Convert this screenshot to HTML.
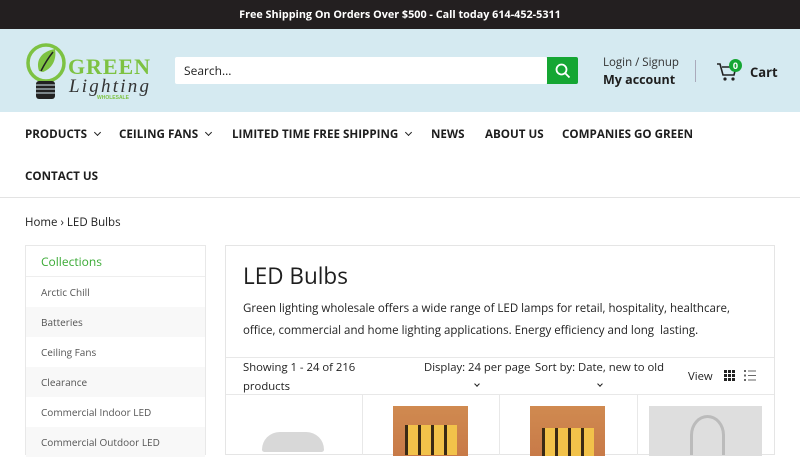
<!DOCTYPE html>
<html><head><meta charset="utf-8"><style>
*{margin:0;padding:0;box-sizing:border-box}
body{width:800px;height:450px;overflow:hidden;background:#fff;font-family:"Open Sans","DejaVu Sans","Liberation Sans",sans-serif;color:#1e1e1e;position:relative}
.a{position:absolute;white-space:nowrap}
.top{left:0;top:0;width:800px;height:29px;background:#231f20;color:#fff;font-weight:bold;font-size:10.8px;text-align:center;line-height:30px}
.hdr{left:0;top:29px;width:800px;height:83px;background:#d5eaf1}
.nav{font-size:11.6px;font-weight:bold;color:#1e1e1e}
.chev{display:inline-block;width:5px;height:5px;border-right:1.5px solid #222;border-bottom:1.5px solid #222;transform:rotate(45deg);margin-left:8px;position:relative;top:-3px}
.side{left:25px;top:245px;width:181px;height:210px;border:1px solid #e8e8e8;background:#fff}
.side div{height:30px;line-height:30px;padding-left:15px;font-size:10px;color:#555}
.main{left:225px;top:245px;width:550px;height:210px;border:1px solid #e5e5e5;background:#fff}
</style></head><body>
<div class="a top">Free Shipping On Orders Over $500 - Call today 614-452-5311</div>
<div class="a hdr"></div>
<svg class="a" style="left:25px;top:41px" width="130" height="62" viewBox="0 0 130 62">
<circle cx="21" cy="22" r="18" fill="none" stroke="#7dc242" stroke-width="3.5"/>
<path d="M14 30 C10 18 18 10 30 8 C32 20 26 28 18 31 Z" fill="#7dc242"/>
<path d="M16 30 C20 22 24 16 28 11" stroke="#222" stroke-width="1.5" fill="none"/>
<rect x="11" y="40" width="19" height="18" rx="3" fill="#222"/>
<path d="M11 44h19M11 48h19M11 52h19" stroke="#d5eaf1" stroke-width="1"/>
<text x="43" y="33" font-family="Liberation Serif,serif" font-weight="bold" font-size="22" fill="#7dc242" textLength="82">GREEN</text>
<text x="44" y="51" font-family="Liberation Serif,serif" font-style="italic" font-size="19" fill="#333" textLength="80">Lighting</text>
<text x="72" y="58" font-family="Liberation Sans,sans-serif" font-weight="bold" font-size="5" fill="#7dc242">WHOLESALE</text>
</svg>
<div class="a" style="left:175px;top:57px;width:372px;height:27px;background:#fff;border-radius:2px;font-size:12px;line-height:28px;padding-left:9px;color:#222">Search...</div>
<div class="a" style="left:547px;top:57px;width:31px;height:27px;background:#15a633;border-radius:0 2px 2px 0"></div>
<svg class="a" style="left:555px;top:63px" width="16" height="16" viewBox="0 0 16 16"><circle cx="6.5" cy="6.5" r="5" fill="none" stroke="#fff" stroke-width="1.8"/><path d="M10.5 10.5L14.5 14.5" stroke="#fff" stroke-width="1.8"/></svg>
<div class="a" style="left:603px;top:55px;font-size:11.5px;color:#333">Login / Signup</div>
<div class="a" style="left:603px;top:71px;font-size:12.5px;font-weight:bold">My account</div>
<div class="a" style="left:695px;top:60px;width:1px;height:22px;background:#aab"></div>
<svg class="a" style="left:716px;top:62px" width="22" height="20" viewBox="0 0 22 20"><path d="M1 2h3l3 11h11l2-8H6" fill="none" stroke="#222" stroke-width="1.6"/><circle cx="9" cy="17" r="1.6" fill="#222"/><circle cx="17" cy="17" r="1.6" fill="#222"/></svg>
<div class="a" style="left:729px;top:59px;width:13px;height:13px;border-radius:50%;background:#15a633;color:#fff;font-size:9px;font-weight:bold;text-align:center;line-height:13px">0</div>
<div class="a" style="left:750px;top:63px;font-size:13px;font-weight:bold">Cart</div>
<div class="a nav" style="left:25px;top:127px">PRODUCTS<span class="chev"></span></div>
<div class="a nav" style="left:119px;top:127px">CEILING FANS<span class="chev"></span></div>
<div class="a nav" style="left:232px;top:127px">LIMITED TIME FREE SHIPPING<span class="chev"></span></div>
<div class="a nav" style="left:431px;top:127px">NEWS</div>
<div class="a nav" style="left:485px;top:127px">ABOUT US</div>
<div class="a nav" style="left:562px;top:127px">COMPANIES GO GREEN</div>
<div class="a nav" style="left:25px;top:169px">CONTACT US</div>
<div class="a" style="left:0;top:197px;width:800px;height:1px;background:#e3e3e3"></div>
<div class="a" style="left:25px;top:215px;font-size:11.5px">Home › LED Bulbs</div>
<div class="a side">
<div style="background:#fff;color:#3aaa35;font-size:12px;height:31px;line-height:31px;border-bottom:1px solid #eee">Collections</div>
<div style="background:#fff">Arctic Chill</div><div style="background:#f8f8f8">Batteries</div><div style="background:#fff">Ceiling Fans</div><div style="background:#f8f8f8">Clearance</div><div style="background:#fff">Commercial Indoor LED</div><div style="background:#f8f8f8">Commercial Outdoor LED</div>
</div>
<div class="a main"></div>
<div class="a" style="left:243px;top:260px;font-size:22.5px;color:#1e1e1e">LED Bulbs</div>
<div class="a" style="left:243px;top:298px;font-size:11.5px;line-height:22px;color:#222">Green lighting wholesale offers a wide range of LED lamps for retail, hospitality, healthcare,<br>office, commercial and home lighting applications. Energy efficiency and long&nbsp; lasting.</div>
<div class="a" style="left:226px;top:357px;width:548px;height:1px;background:#e8e8e8"></div>
<div class="a" style="left:243px;top:358px;font-size:11.3px;line-height:19px">Showing 1 - 24 of 216<br>products</div>
<div class="a" style="left:424px;top:358px;font-size:11.3px;line-height:19px;text-align:center">Display: 24 per page<br><span class="chev" style="width:4px;height:4px;margin:0;top:-4px"></span></div>
<div class="a" style="left:535px;top:358px;font-size:11.3px;line-height:19px;text-align:center">Sort by: Date, new to old<br><span class="chev" style="width:4px;height:4px;margin:0;top:-4px"></span></div>
<div class="a" style="left:688px;top:369px;font-size:11.3px">View</div>
<svg class="a" style="left:723px;top:369px" width="34" height="13" viewBox="0 0 34 13"><g fill="#222"><rect x="1" y="1" width="3" height="3"/><rect x="5" y="1" width="3" height="3"/><rect x="9" y="1" width="3" height="3"/><rect x="1" y="5" width="3" height="3"/><rect x="5" y="5" width="3" height="3"/><rect x="9" y="5" width="3" height="3"/><rect x="1" y="9" width="3" height="3"/><rect x="5" y="9" width="3" height="3"/><rect x="9" y="9" width="3" height="3"/></g><g fill="#666"><rect x="21" y="1" width="2" height="2"/><rect x="21" y="5.5" width="2" height="2"/><rect x="21" y="10" width="2" height="2"/><rect x="25" y="1.5" width="8" height="1"/><rect x="25" y="6" width="8" height="1"/><rect x="25" y="10.5" width="8" height="1"/></g></svg>
<div class="a" style="left:226px;top:394px;width:548px;height:1px;background:#e8e8e8"></div>
<div class="a" style="left:362px;top:395px;width:1px;height:60px;background:#e8e8e8"></div>
<div class="a" style="left:499px;top:395px;width:1px;height:60px;background:#e8e8e8"></div>
<div class="a" style="left:637px;top:395px;width:1px;height:60px;background:#e8e8e8"></div>
<div class="a" style="left:262px;top:432px;width:62px;height:20px;border-radius:30px 30px 4px 4px;background:#d8d8d8"></div>
<div class="a" style="left:393px;top:406px;width:75px;height:50px;background:linear-gradient(#d08a50,#c87a48)"></div>
<div class="a" style="left:405px;top:425px;width:52px;height:30px;background:repeating-linear-gradient(90deg,#3a2a15 0 3px,#f2c24a 3px 13px)"></div>
<div class="a" style="left:530px;top:406px;width:75px;height:50px;background:linear-gradient(#d08a50,#c87a48)"></div>
<div class="a" style="left:542px;top:428px;width:52px;height:28px;background:repeating-linear-gradient(90deg,#3a2a15 0 3px,#f2c24a 3px 13px)"></div>
<div class="a" style="left:649px;top:406px;width:113px;height:50px;background:#dedede"></div>
<div class="a" style="left:690px;top:415px;width:35px;height:40px;border-radius:50% 50% 0 0;border:3px solid #bbb;border-bottom:none"></div>
</body></html>
